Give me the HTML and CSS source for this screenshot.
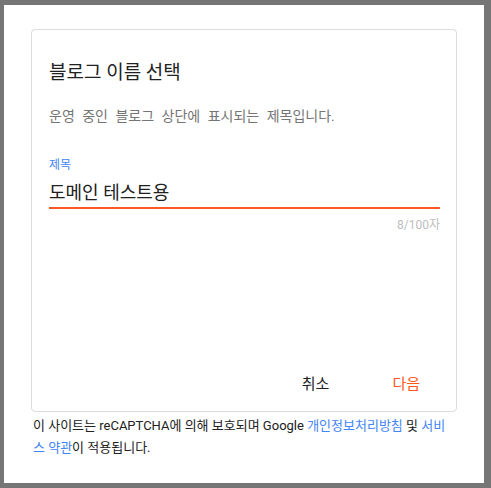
FILE: index.html
```html
<!DOCTYPE html>
<html lang="ko">
<head>
    <meta charset="UTF-8">
    <meta name="viewport" content="width=device-width, initial-scale=1.0">
    <title>블로그 이름 선택</title>
    <link rel="stylesheet" href="styles.css">
</head>
<body>
    <div class="frame">
        <div class="card">
            <h1 class="title">블로그 이름 선택</h1>
            <p class="desc">운영 중인 블로그 상단에 표시되는 제목입니다.</p>
            <div class="field">
                <label class="field-label" for="blog_title">제목</label>
                <div class="field-input">도메인 테스트용</div>
                <div class="counter">8/100자</div>
            </div>
            <div class="actions">
                <button class="btn btn-cancel">취소</button>
                <button class="btn btn-next">다음</button>
            </div>
        </div>
        <p class="notice">이 사이트는 reCAPTCHA에 의해 보호되며 Google <a href="#">개인정보처리방침</a> 및 <a href="#">서비스 약관</a>이 적용됩니다.</p>
    </div>
</body>
</html>
```

FILE: styles.css
```css
body {
    margin: 0;
    background: #767676;
    font-family: Roboto, "Noto Sans CJK KR", sans-serif;
}
.frame {
    margin: 5px 7px 5px 4px;
    height: 478px;
    background: #fff;
    padding-top: 24px;
    box-sizing: border-box;
}
.card {
    margin: 0 27px;
    height: 383px;
    border: 1px solid #dadce0;
    border-radius: 4px;
    box-sizing: border-box;
    padding: 31px 16px 0 17px;
    display: flex;
    flex-direction: column;
}
.title {
    margin: 0;
    font-size: 19px;
    font-weight: 400;
    line-height: 24px;
    color: #212121;
}
.desc {
    margin: 21px 0 0;
    font-size: 14px;
    line-height: 20px;
    word-spacing: 4px;
    color: #757575;
}
.field {
    margin-top: 31px;
}
.field-label {
    display: block;
    font-size: 12px;
    line-height: 16px;
    color: #4285f4;
}
.field-input {
    margin-top: 7px;
    font-size: 18px;
    line-height: 26px;
    color: #212121;
    padding-bottom: 1px;
    border-bottom: 2px solid #ff5722;
}
.counter {
    margin-top: 8px;
    text-align: right;
    font-size: 12px;
    line-height: 16px;
    color: #bdbdbd;
}
.actions {
    margin-top: auto;
    margin-bottom: 13px;
    display: flex;
    justify-content: flex-end;
    gap: 23px;
}
.btn {
    background: none;
    border: none;
    font-family: inherit;
    font-size: 15px;
    line-height: 20px;
    padding: 4px 20px;
    cursor: pointer;
}
.btn-cancel {
    color: #212121;
}
.btn-next {
    color: #ff5722;
}
.notice {
    margin: 3px 29px 0 29px;
    font-size: 13px;
    line-height: 22px;
    color: #212121;
}
.notice a {
    color: #4285f4;
    text-decoration: none;
}
```
